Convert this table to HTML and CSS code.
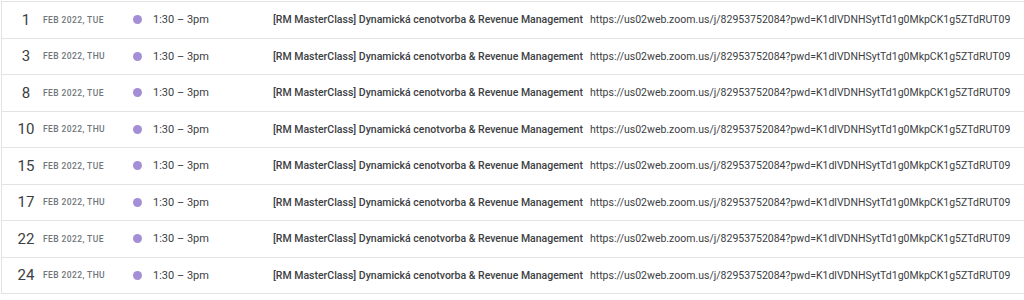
FILE: index.html
```html
<!DOCTYPE html>
<html>
<head>
<meta charset="utf-8">
<link rel="stylesheet" href="styles.css">
</head>
<body>
<div class="agenda">
  <div class="row"><span class="day">1</span><span class="date">Feb 2022, Tue</span><span class="dot"></span><span class="time">1:30 – 3pm</span><span class="title">[RM MasterClass] Dynamická cenotvorba &amp; Revenue Management</span><span class="url">https://us02web.zoom.us/j/82953752084?pwd=K1dlVDNHSytTd1g0MkpCK1g5ZTdRUT09</span></div>
  <div class="row"><span class="day">3</span><span class="date">Feb 2022, Thu</span><span class="dot"></span><span class="time">1:30 – 3pm</span><span class="title">[RM MasterClass] Dynamická cenotvorba &amp; Revenue Management</span><span class="url">https://us02web.zoom.us/j/82953752084?pwd=K1dlVDNHSytTd1g0MkpCK1g5ZTdRUT09</span></div>
  <div class="row"><span class="day">8</span><span class="date">Feb 2022, Tue</span><span class="dot"></span><span class="time">1:30 – 3pm</span><span class="title">[RM MasterClass] Dynamická cenotvorba &amp; Revenue Management</span><span class="url">https://us02web.zoom.us/j/82953752084?pwd=K1dlVDNHSytTd1g0MkpCK1g5ZTdRUT09</span></div>
  <div class="row"><span class="day">10</span><span class="date">Feb 2022, Thu</span><span class="dot"></span><span class="time">1:30 – 3pm</span><span class="title">[RM MasterClass] Dynamická cenotvorba &amp; Revenue Management</span><span class="url">https://us02web.zoom.us/j/82953752084?pwd=K1dlVDNHSytTd1g0MkpCK1g5ZTdRUT09</span></div>
  <div class="row"><span class="day">15</span><span class="date">Feb 2022, Tue</span><span class="dot"></span><span class="time">1:30 – 3pm</span><span class="title">[RM MasterClass] Dynamická cenotvorba &amp; Revenue Management</span><span class="url">https://us02web.zoom.us/j/82953752084?pwd=K1dlVDNHSytTd1g0MkpCK1g5ZTdRUT09</span></div>
  <div class="row"><span class="day">17</span><span class="date">Feb 2022, Thu</span><span class="dot"></span><span class="time">1:30 – 3pm</span><span class="title">[RM MasterClass] Dynamická cenotvorba &amp; Revenue Management</span><span class="url">https://us02web.zoom.us/j/82953752084?pwd=K1dlVDNHSytTd1g0MkpCK1g5ZTdRUT09</span></div>
  <div class="row"><span class="day">22</span><span class="date">Feb 2022, Tue</span><span class="dot"></span><span class="time">1:30 – 3pm</span><span class="title">[RM MasterClass] Dynamická cenotvorba &amp; Revenue Management</span><span class="url">https://us02web.zoom.us/j/82953752084?pwd=K1dlVDNHSytTd1g0MkpCK1g5ZTdRUT09</span></div>
  <div class="row"><span class="day">24</span><span class="date">Feb 2022, Thu</span><span class="dot"></span><span class="time">1:30 – 3pm</span><span class="title">[RM MasterClass] Dynamická cenotvorba &amp; Revenue Management</span><span class="url">https://us02web.zoom.us/j/82953752084?pwd=K1dlVDNHSytTd1g0MkpCK1g5ZTdRUT09</span></div>
</div>
</body>
</html>
```
FILE: styles.css
```css
html, body {
  margin: 0;
  padding: 0;
  background: #ffffff;
  overflow: hidden;
}
body {
  font-family: Roboto, "Liberation Sans", Arial, sans-serif;
  color: #3c4043;
}
.agenda {
  margin: 1px 0 0 1px;
  border-left: 1px solid #e3e3e3;
  border-top: 1px solid #e3e3e3;
}
.row {
  display: flex;
  align-items: center;
  height: 35.5px;
  border-bottom: 1px solid #e3e3e3;
  white-space: nowrap;
}
.day {
  width: 32px;
  margin-left: 8px;
  text-align: center;
  font-size: 15px;
  color: #3c4043;
}
.date {
  margin-left: 1px;
  width: 90px;
  font-size: 8.5px;
  letter-spacing: 0.4px;
  text-transform: uppercase;
  color: #70757a;
  font-weight: 500;
}
.dot {
  width: 9px;
  height: 9px;
  margin-left: -0.5px;
  border-radius: 50%;
  background: #a48fd7;
}
.time {
  margin-left: 11.5px;
  width: 120px;
  font-size: 11px;
  color: #3c4043;
}
.title {
  font-size: 10.5px;
  font-weight: 500;
  color: #3c4043;
}
.url {
  margin-left: 7px;
  font-size: 10.5px;
  color: #3c4043;
}
```
